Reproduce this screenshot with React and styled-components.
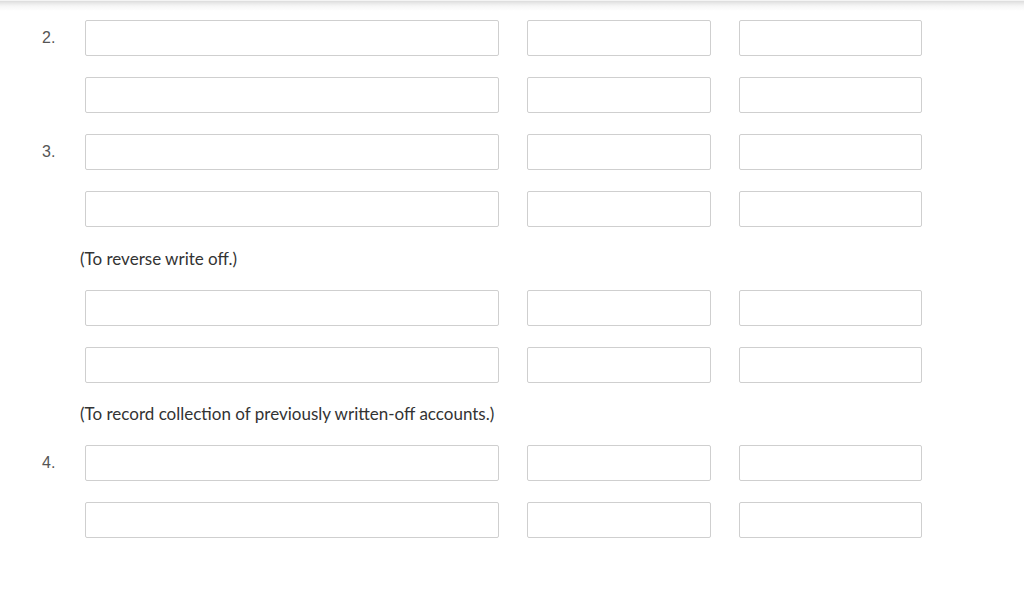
import React from 'react';
import styled, { createGlobalStyle } from 'styled-components';

const GlobalStyle = createGlobalStyle`
  body {
    margin: 0;
    background: #fff;
    font-family: Lato, "Open Sans", sans-serif;
  }
`;

const TopShadow = styled.div`
  height: 10px;
  border-top: 1px solid #f4f4f4;
  background: linear-gradient(to bottom, #dcdcdc 0px, #e8e8e8 2px, #f6f6f6 5px, #ffffff 10px);
`;

const Sheet = styled.div`
  display: flex;
  flex-direction: column;
  gap: 21px;
  padding: 9px 0 40px;
`;

const Row = styled.div`
  display: flex;
  align-items: center;
  height: 36px;
`;

const Num = styled.div`
  width: 85px;
  box-sizing: border-box;
  padding-left: 42px;
  font-family: "Liberation Sans", Arial, sans-serif;
  font-size: 16px;
  color: #555;
`;

const Field = styled.input`
  box-sizing: border-box;
  height: 36px;
  width: ${p => p.$w}px;
  margin-left: ${p => p.$gap || 0}px;
  border: 1px solid #cfcfcf;
  border-radius: 2px;
  background: #fff;
  padding: 4px 8px;
  font-family: Lato, sans-serif;
  font-size: 14px;
  outline: none;
`;

const Note = styled.div`
  height: ${p => p.$h}px;
  line-height: ${p => p.$h}px;
  padding-left: 80px;
  font-size: 17px;
  color: #333;
`;

const Entry = ({ num }) => (
  <Row>
    <Num>{num}</Num>
    <Field $w={414} />
    <Field $w={184} $gap={28} />
    <Field $w={183} $gap={28} />
  </Row>
);

export default function App() {
  return (
    <>
      <GlobalStyle />
      <TopShadow />
      <Sheet>
        <Entry num="2." />
        <Entry />
        <Entry num="3." />
        <Entry />
        <Note $h={21}>(To reverse write off.)</Note>
        <Entry />
        <Entry />
        <Note $h={20}>(To record collection of previously written-off accounts.)</Note>
        <Entry num="4." />
        <Entry />
      </Sheet>
    </>
  );
}
